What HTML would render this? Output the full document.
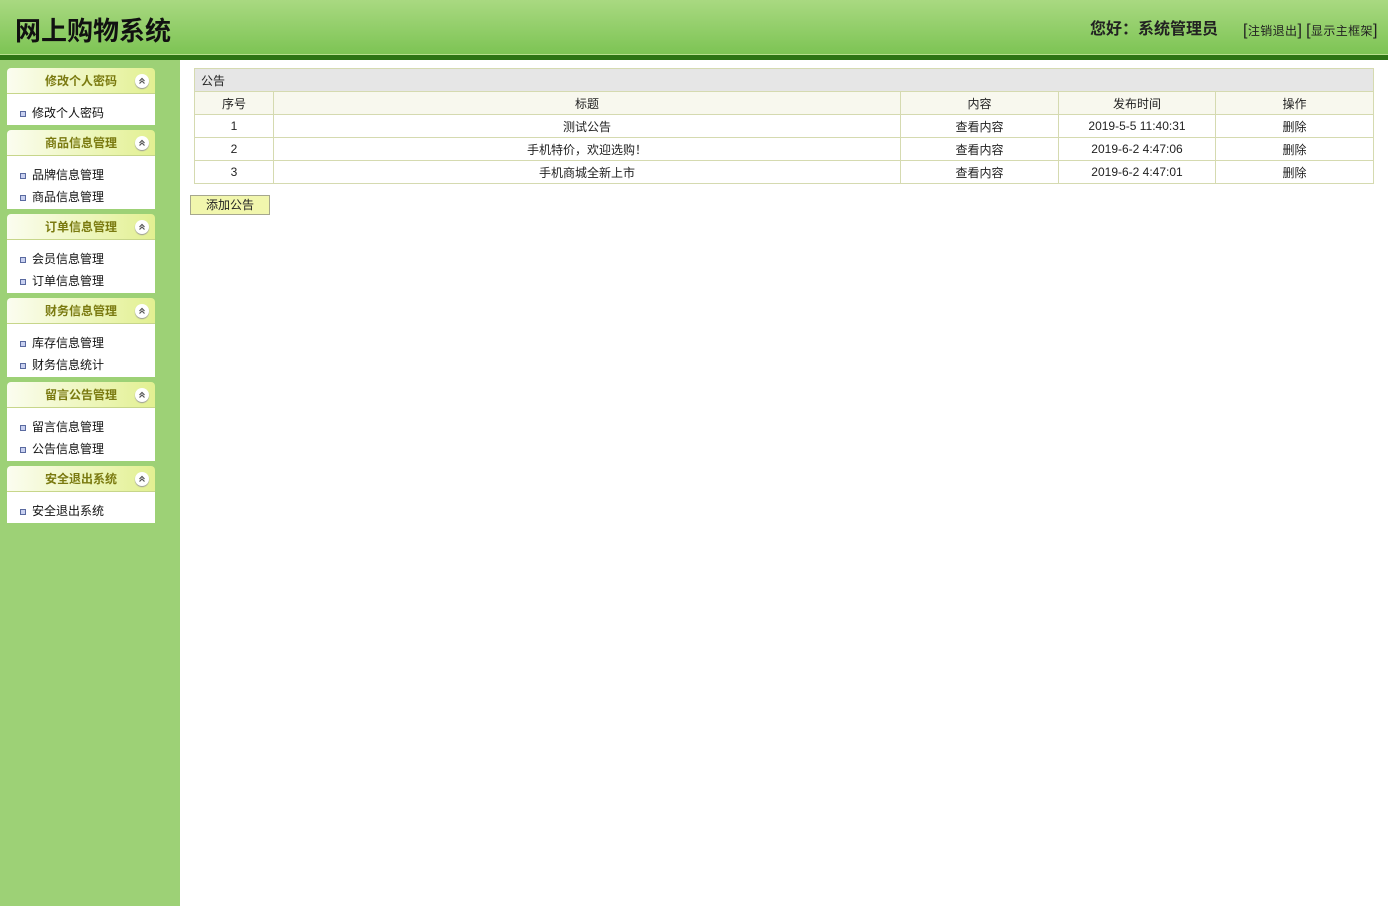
<!DOCTYPE html>
<html><head><meta charset="utf-8"><style>
*{margin:0;padding:0;box-sizing:border-box}
body{width:1388px;height:906px;overflow:hidden;font-family:"Liberation Sans","Noto Sans CJK SC",sans-serif;font-size:12px;color:#000;background:#fff;position:relative}
#hd{position:absolute;left:0;top:0;width:1388px;height:55px;background:linear-gradient(#a9d981,#7dc454);border-bottom:1px solid #b8e08e}
#hd h1{position:absolute;left:15px;top:14px;font-size:26px;font-weight:bold;line-height:34px;color:#111}
#hello{position:absolute;left:1090px;top:19px;font-size:16px;font-weight:bold;color:#222;line-height:22px}
#links{position:absolute;left:1243px;top:21px;font-size:12px;color:#222;line-height:20px;letter-spacing:0.4px}
#links span{font-size:16px}
#bar{position:absolute;left:0;top:55px;width:1388px;height:5px;background:#2d7414}
#sb{position:absolute;left:0;top:60px;width:180px;height:846px;background:#9dd176}
.ph{position:absolute;left:7px;width:148px;height:26px;border-radius:4px 4px 0 0;background:linear-gradient(90deg,#fbfdf0,#e2f091);border-bottom:1px solid #c7d68a;color:#7a7a10;font-weight:bold;font-size:12px;line-height:26px;text-align:center}
.ph svg{position:absolute;right:6px;top:6px;width:14px;height:14px;border-radius:50%;background:#fff;box-shadow:0 1px 1px #999}
.pb{position:absolute;left:7px;width:148px;background:#fff;padding-top:8px}
.pb div{height:22px;line-height:22px;padding-left:25px;position:relative;color:#111}
.pb div:before{content:"";position:absolute;left:13px;top:9px;width:4px;height:4px;border:1px solid #5a6aa0;background:#c8d0f0}
table{position:absolute;left:194px;top:68px;width:1180px;border-collapse:collapse}
td{border:1px solid #d5dab0;height:23px;text-align:center;color:#222}
tr.cap td{background:#e6e6e6;text-align:left;padding-left:6px}
tr.th td{background:#f8f8ee}
#btn{position:absolute;left:190px;top:195px;width:80px;height:20px;background:#f1f6ad;border:1px solid #a6a78e;text-align:center;line-height:18px;color:#222}
</style></head><body>
<div id="hd"><h1>网上购物系统</h1><div id="hello">您好：系统管理员</div><div id="links"><span>[</span>注销退出<span>]</span> <span>[</span>显示主框架<span>]</span></div></div>
<div id="bar"></div>
<div id="sb"></div>
<svg width="0" height="0" style="position:absolute"><defs><symbol id="ch" viewBox="0 0 14 14"><path d="M4.5 7 L7 4.5 L9.5 7 M4.5 9.5 L7 7 L9.5 9.5" fill="none" stroke="#555" stroke-width="1.2"/></symbol></defs></svg>
<div class="ph" style="top:68px">修改个人密码<svg><use href="#ch"/></svg></div>
<div class="pb" style="top:94px;height:31px"><div>修改个人密码</div></div>
<div class="ph" style="top:130px">商品信息管理<svg><use href="#ch"/></svg></div>
<div class="pb" style="top:156px;height:53px"><div>品牌信息管理</div><div>商品信息管理</div></div>
<div class="ph" style="top:214px">订单信息管理<svg><use href="#ch"/></svg></div>
<div class="pb" style="top:240px;height:53px"><div>会员信息管理</div><div>订单信息管理</div></div>
<div class="ph" style="top:298px">财务信息管理<svg><use href="#ch"/></svg></div>
<div class="pb" style="top:324px;height:53px"><div>库存信息管理</div><div>财务信息统计</div></div>
<div class="ph" style="top:382px">留言公告管理<svg><use href="#ch"/></svg></div>
<div class="pb" style="top:408px;height:53px"><div>留言信息管理</div><div>公告信息管理</div></div>
<div class="ph" style="top:466px">安全退出系统<svg><use href="#ch"/></svg></div>
<div class="pb" style="top:492px;height:31px"><div>安全退出系统</div></div>
<table>
<tr class="cap"><td colspan="5">公告</td></tr>
<tr class="th"><td style="width:79px">序号</td><td style="width:627px">标题</td><td style="width:158px">内容</td><td style="width:157px">发布时间</td><td>操作</td></tr>
<tr><td>1</td><td>测试公告</td><td>查看内容</td><td>2019-5-5 11:40:31</td><td>删除</td></tr>
<tr><td>2</td><td>手机特价，欢迎选购！</td><td>查看内容</td><td>2019-6-2 4:47:06</td><td>删除</td></tr>
<tr><td>3</td><td>手机商城全新上市</td><td>查看内容</td><td>2019-6-2 4:47:01</td><td>删除</td></tr>
</table>
<div id="btn">添加公告</div>
</body></html>
